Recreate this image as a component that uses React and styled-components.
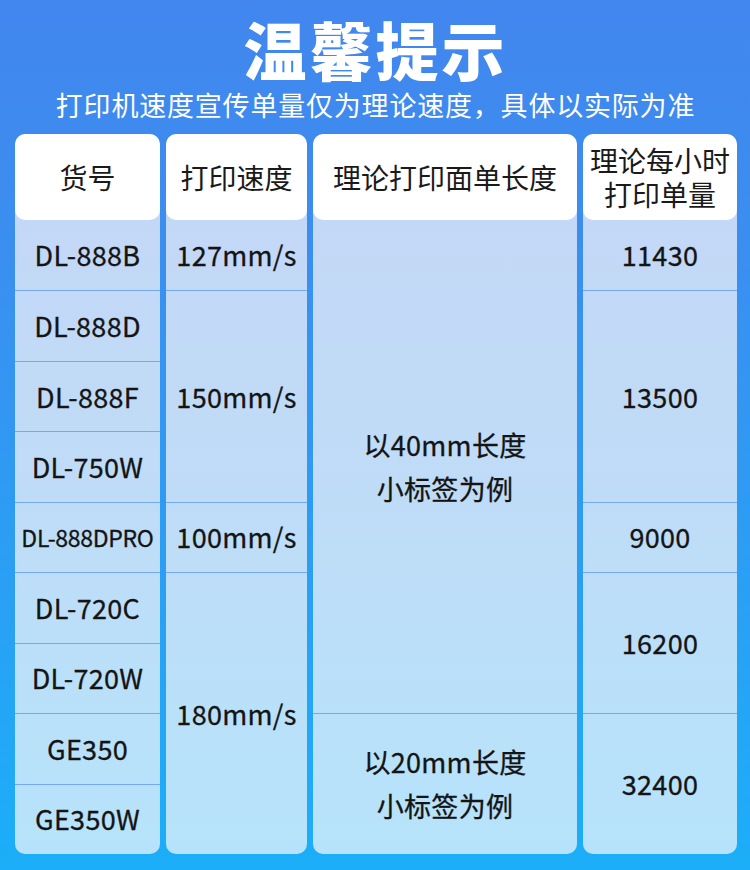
import styled, { createGlobalStyle } from "styled-components";

const GlobalStyle = createGlobalStyle`
  html, body {
    margin: 0;
    padding: 0;
  }
  body {
    font-family: "Noto Sans CJK SC", "Noto Sans", sans-serif;
  }
`;

const Page = styled.div`
  width: 750px;
  height: 870px;
  box-sizing: border-box;
  padding: 16px 14px 0 15px;
  background: linear-gradient(180deg, #4286ee 0%, #3a8ff0 30%, #1caef8 100%);
  display: flex;
  flex-direction: column;
  align-items: center;
`;

const Title = styled.h1`
  margin: 0;
  font-size: 63px;
  line-height: 63px;
  font-weight: 900;
  color: #fff;
  letter-spacing: 3px;
`;

const Subtitle = styled.p`
  margin: 12px 0 0;
  font-size: 27px;
  line-height: 27px;
  color: #fff;
  letter-spacing: 0.8px;
`;

const Table = styled.div`
  margin-top: 16px;
  width: 100%;
  display: grid;
  grid-template-columns: 145px 141px 264px 154px;
  column-gap: 6px;
`;

const Column = styled.div`
  height: 720px;
  border-radius: 10px;
  overflow: hidden;
  display: flex;
  flex-direction: column;
  background: linear-gradient(180deg, #c4d7f6 0%, #bfdcf7 50%, #b6e3fb 100%);
`;

const Header = styled.div`
  height: 86px;
  flex: none;
  background: #fff;
  border-radius: 10px;
  display: flex;
  align-items: center;
  justify-content: center;
  text-align: center;
  font-size: 28px;
  line-height: 34px;
  color: #1a1a1a;
`;

const Body = styled.div`
  flex: 1;
  display: grid;
  grid-template-rows: repeat(9, 1fr);
`;

const Cell = styled.div`
  grid-row: span ${(p) => p.$span || 1};
  display: flex;
  align-items: center;
  justify-content: center;
  text-align: center;
  font-size: ${(p) => (p.$small ? "23px" : "27px")};
  letter-spacing: ${(p) => (p.$small ? "-0.3px" : "0.3px")};
  line-height: 44px;
  color: #141414;
  -webkit-text-stroke: 0.3px #141414;
  white-space: nowrap;

  & + & {
    border-top: 1px solid #74a9f1;
  }
`;

const columns = [
  {
    title: "货号",
    cells: [
      { text: "DL-888B" },
      { text: "DL-888D" },
      { text: "DL-888F" },
      { text: "DL-750W" },
      { text: "DL-888DPRO", small: true },
      { text: "DL-720C" },
      { text: "DL-720W" },
      { text: "GE350" },
      { text: "GE350W" },
    ],
  },
  {
    title: "打印速度",
    cells: [
      { text: "127mm/s" },
      { text: "150mm/s", span: 3 },
      { text: "100mm/s" },
      { text: "180mm/s", span: 4 },
    ],
  },
  {
    title: "理论打印面单长度",
    cells: [
      { text: ["以40mm长度", "小标签为例"], span: 7 },
      { text: ["以20mm长度", "小标签为例"], span: 2 },
    ],
  },
  {
    title: ["理论每小时", "打印单量"],
    cells: [
      { text: "11430" },
      { text: "13500", span: 3 },
      { text: "9000" },
      { text: "16200", span: 2 },
      { text: "32400", span: 2 },
    ],
  },
];

const lines = (t) =>
  Array.isArray(t)
    ? t.map((l, i) => (
        <span key={i}>
          {i > 0 && <br />}
          {l}
        </span>
      ))
    : t;

export default function App() {
  return (
    <>
      <GlobalStyle />
      <Page>
        <Title>温馨提示</Title>
        <Subtitle>打印机速度宣传单量仅为理论速度，具体以实际为准</Subtitle>
        <Table>
          {columns.map((col, i) => (
            <Column key={i}>
              <Header>
                <div>{lines(col.title)}</div>
              </Header>
              <Body>
                {col.cells.map((c, j) => (
                  <Cell key={j} $span={c.span} $small={c.small}>
                    <div>{lines(c.text)}</div>
                  </Cell>
                ))}
              </Body>
            </Column>
          ))}
        </Table>
      </Page>
    </>
  );
}
